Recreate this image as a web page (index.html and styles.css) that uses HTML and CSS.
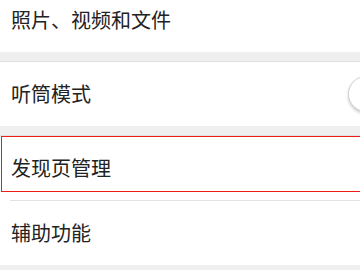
FILE: index.html
```html
<!DOCTYPE html>
<html lang="zh-CN">
<head>
<meta charset="utf-8">
<title>设置</title>
<link rel="stylesheet" href="styles.css">
</head>
<body>
<div class="page">
  <div class="group first">
    <div class="row"><span class="label">照片、视频和文件</span></div>
  </div>
  <div class="group">
    <div class="row">
      <span class="label">听筒模式</span>
      <span class="switch"><span class="knob"></span></span>
    </div>
  </div>
  <div class="group">
    <div class="row focused"><span class="label">发现页管理</span></div>
    <div class="divider"></div>
    <div class="row"><span class="label">辅助功能</span></div>
  </div>
  <div class="group"></div>
</div>
</body>
</html>
```

FILE: styles.css
```css
html, body {
  margin: 0;
  padding: 0;
  overflow: hidden;
  background: #efefef;
}

.page {
  font-family: "Noto Sans CJK SC", "Noto Sans", sans-serif;
  color: #222222;
  display: flex;
  flex-direction: column;
  gap: 9px;
  overflow: hidden;
}

.group {
  background: #ffffff;
  border-top: 1px solid #e0e0e0;
  display: flex;
  flex-direction: column;
}

.group.first {
  margin-top: -12px;
  border-top: none;
}

.row {
  position: relative;
  height: 64px;
  display: flex;
  align-items: center;
  padding-left: 11px;
  font-size: 20px;
}

.label {
  line-height: 1;
}

.focused::after {
  content: "";
  position: absolute;
  left: 1px;
  top: 0;
  width: 500px;
  height: 54px;
  border-top: 1px solid #f01c16;
  border-bottom: 1px solid #f01c16;
  border-left: 1px solid #f01c16;
}

.divider {
  height: 1px;
  margin-left: 10px;
  background: #e3e3e3;
}

.switch {
  margin-left: auto;
  margin-right: -44px;
  width: 54px;
  height: 34px;
  border-radius: 18px;
  border: 1px solid #dcdcdc;
  background: #ffffff;
  display: flex;
  align-items: center;
  flex: none;
}

.knob {
  width: 34px;
  height: 34px;
  border-radius: 50%;
  background: #ffffff;
  border: 1px solid #d6d6d6;
  box-shadow: 0 2px 3px rgba(0, 0, 0, 0.18);
  margin-left: -1px;
}
```
